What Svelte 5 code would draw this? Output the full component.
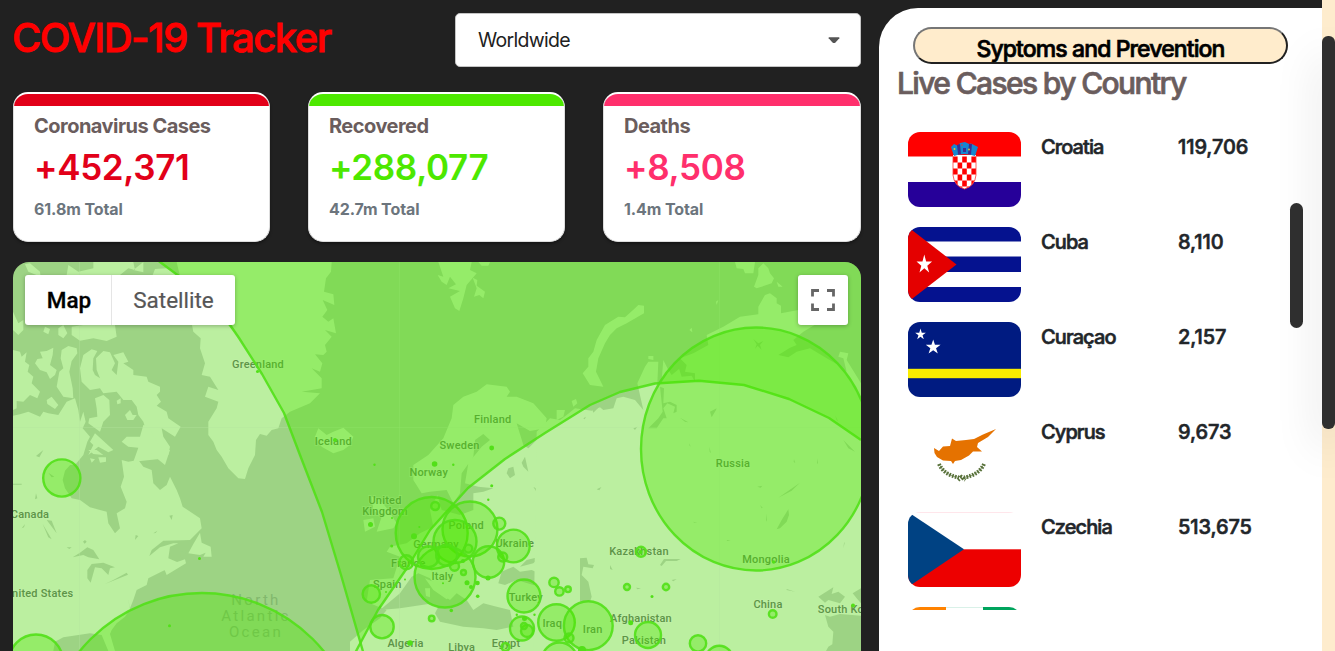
<script>
  const stats = [
    { title: 'Coronavirus Cases', value: '+452,371', total: '61.8m Total', color: '#e20019' },
    { title: 'Recovered', value: '+288,077', total: '42.7m Total', color: '#4de800' },
    { title: 'Deaths', value: '+8,508', total: '1.4m Total', color: '#ff2f6c' }
  ];
  const countries = [
    { flag: 'hr', name: 'Croatia', cases: '119,706' },
    { flag: 'cu', name: 'Cuba', cases: '8,110' },
    { flag: 'cw', name: 'Curaçao', cases: '2,157' },
    { flag: 'cy', name: 'Cyprus', cases: '9,673' },
    { flag: 'cz', name: 'Czechia', cases: '513,675' },
    { flag: 'ci', name: '', cases: '' }
  ];
  // label, x, baseline
  const labels = [
    ['Greenland', 258, 367.5], ['Iceland', 333.3, 444.5], ['Finland', 492.7, 422.5], ['Sweden', 459.5, 449],
    ['Norway', 428.7, 475.5], ['United', 385, 503.5], ['Kingdom', 385, 515], ['Poland', 466.3, 528.5],
    ['Germany', 436, 548], ['Ukraine', 514.8, 547], ['France', 408.3, 567], ['Italy', 442.5, 580],
    ['Spain', 387.3, 587.5], ['Turkey', 525.8, 600.5], ['Iraq', 552.3, 627], ['Iran', 592.7, 633],
    ['Egypt', 506, 646.5], ['Algeria', 405.5, 647], ['Libya', 461.7, 651], ['Russia', 733, 467],
    ['Mongolia', 766, 562.5], ['Kazakhstan', 639, 555], ['China', 768, 607.5], ['Afghanistan', 641, 621.5],
    ['Pakistan', 644, 643.5], ['Canada', 30, 518], ['United States', 39, 597], ['South Korea', 849, 612.5]
  ];
  const circles = [
    [61.8, 478, 18.6], [36, 661.5, 27], [201.7, 750, 157],
    [431.7, 533, 36], [470, 529, 27.5], [455, 541.5, 21.5], [445, 577, 30.5], [488.5, 562, 15.7], [513.3, 546, 16.4],
    [499.3, 523.6, 6], [524, 596, 16.5], [428.5, 556.7, 10.5], [446.7, 555.3, 10.5], [435.2, 506, 4], [406.3, 562.3, 7],
    [371.3, 594, 8.7], [382, 626.7, 11.7], [522, 628.5, 12], [527, 631, 6], [556.5, 622.5, 18.3], [588.3, 625.7, 24.4],
    [559.5, 660, 17.5], [554, 582.4, 4.7], [559.4, 591.4, 4.2], [568, 589.3, 2.8], [431.7, 618.4, 2.8], [502.7, 557, 4.5],
    [468.3, 548.6, 4], [454.5, 566.3, 4.5], [463.5, 572.5, 2.5], [648, 635, 13], [698, 643.4, 8.2], [719.3, 659, 13.3],
    [641, 551.8, 5], [627, 587, 3], [666, 587, 3.2], [772.7, 614, 3.8], [569, 638, 4.5], [524, 626, 3], [505.5, 647, 4]
  ];
  const dots = [
    [335, 440, 2], [491.7, 448, 2.4], [434.6, 464, 2.8], [370.5, 524.5, 2.5], [414, 536.3, 3], [374.5, 464.7, 1.2],
    [453.3, 464.7, 1.2], [491.7, 485.7, 1.5], [488.3, 499.7, 1.2], [392, 518, 1], [391.7, 546, 1.5], [419.3, 527, 1],
    [380, 607, 1.2], [386, 592, 1], [405, 579.6, 1], [443, 583.3, 1], [467, 582.7, 2.5], [477.5, 583, 2.3], [471, 587, 2],
    [477.7, 596.2, 1.8], [451.3, 610.5, 1.8], [516.8, 614.8, 1.2], [534.5, 614.8, 1.2], [488, 578, 2.5], [410, 643, 2.8],
    [199.5, 558.5, 1.5], [169.5, 625.7, 1.5], [257.5, 371.5, 1.5], [773.7, 562, 1.8], [652, 596.5, 1.5], [630.7, 622.7, 2.5],
    [853, 605.5, 2], [582, 650, 4], [524.5, 618.5, 2.5], [463, 561, 2], [640.5, 552, 2]
  ];
  const star = '0,-10 2.25,-3.1 9.5,-3.1 3.65,1.2 5.9,8.1 0,3.8 -5.9,8.1 -3.65,1.2 -9.5,-3.1 -2.25,-3.1';
  const checks = [];
  for (let r = 0; r < 6; r++) for (let c = 0; c < 5; c++) if ((r + c) % 2 === 0) checks.push([c, r]);
</script>

<div class="app">
  <main class="left">
    <header>
      <h1>COVID-19 Tracker</h1>
      <div class="select"><span>Worldwide</span><svg width="12" height="7" viewBox="0 0 12 7"><path d="M.7.3h10.600v1L7.500 5.500q-1.500 1-3 0L.7 1.300z" fill="#555" /></svg></div>
    </header>

    <section class="stats">
      {#each stats as s}
        <article style:--tone={s.color}>
          <h2>{s.title}</h2>
          <strong>{s.value}</strong>
          <p>{s.total}</p>
        </article>
      {/each}
    </section>

    <section class="map">
      <svg class="world" viewBox="13 262 848 389" width="848" height="389">
        <defs>
          <clipPath id="north"><path d="M150,250 L160,262 206,299 239,338 262,374 284,413 300,455 322,512 341,575 361,643 378,610 407,568 430,530 468,488 505,459 545,433 590,405 620,392 655,383.500 699,380.700 744,385 789,399 829,418 861,440 V250Z" /></clipPath>
        </defs>
        <rect x="13" y="262" width="848" height="389" fill="#9dd384" />

        <g transform="translate(0 255) scale(.33333)" class="land">
          <path d="M39,285 L60,290 65,305 80,292 75,320 88,330 83,350 100,365 95,385 120,410 112,430 90,420 70,440 50,438 50,460 39,465Z" />
          <path d="M39,482 L60,478 85,470 120,485 130,470 145,475 175,480 200,440 225,430 235,465 240,500 250,470 257,500 248,520 270,545 262,560 250,600 225,630 39,630Z" />
          <path d="M120,290 L140,288 160,278 158,300 150,330 170,345 165,360 150,372 140,352 120,345 105,325 112,312 128,310Z" />
          <path d="M185,285 L205,273 230,280 232,295 215,318 208,350 218,400 220,430 190,425 170,395 178,350 190,340 182,310Z" />
          <path d="M245,380 L240,340 250,300 275,283 292,288 280,310 278,345 285,360 300,370 290,345 288,310 310,288 330,292 345,325 335,345 350,360 355,320 340,300 370,292 385,320 370,325 400,345 400,360 440,365 445,380 480,395 480,410 470,420 483,440 470,452 500,470 505,490 542,515 525,545 485,520 490,545 510,575 505,600 485,610 450,565 430,500 415,480 410,455 395,435 370,435 350,410 310,415 300,400 270,405Z" />
          <path d="M285,430 L310,420 328,435 330,480 310,500 300,530 265,505 268,490 292,485 290,460Z M285,535 L340,585 325,592 295,575 265,600 280,570 270,560Z M365,560 L380,545 420,545 430,510 445,512 470,560 490,585 500,610 400,620 415,578 385,575Z M375,480 L390,465 398,480 410,480 400,495 382,495Z M350,437 L362,430 362,445 352,448Z" />
          <path d="M140,435 L155,425 175,450 165,462 142,447Z M215,215 L250,210 345,210 350,245 320,258 280,250 240,257 215,240Z M175,220 L190,210 202,235 190,250 175,240Z M135,215 L150,222 145,238 130,230Z M39,170 L55,205 70,195 70,225 55,240 39,225Z" />
          <path d="M75,28 L90,25 120,50 122,65 85,50Z M205,30 L235,50 280,40 280,21 400,21 405,45 385,40 360,60 200,60Z M430,21 L400,45 430,52Z M458,60 L465,42 500,40 530,60Z" />
          <path d="M530,21 L995,21 993,50 978,70 972,110 1000,118 1003,150 968,135 982,165 967,185 985,200 1000,190 1008,235 975,225 995,245 975,270 980,290 970,300 945,298 967,325 960,350 935,340 965,370 965,400 905,410 960,415 930,445 870,470 845,490 835,520 815,525 800,542 780,537 768,555 765,600 745,640 735,672 715,670 685,640 665,605 650,585 640,560 625,540 625,500 650,460 655,440 615,425 625,395 655,405 630,365 605,360 615,325 600,280 602,250 580,230 575,205 560,150Z" />
        </g>
        <g transform="translate(0 450) scale(.33333)">
          <path class="land" d="M39,0 L230,0 215,40 195,62 188,90 195,115 215,145 240,150 270,172 320,185 325,220 345,250 360,235 350,190 375,175 380,155 362,110 372,80 365,30 385,35 415,30 430,50 455,60 460,100 480,120 500,105 510,80 530,120 540,145 548,170 600,205 605,235 570,270 490,272 455,300 448,318 480,292 520,280 535,280 510,290 505,325 545,342 510,355 490,362 445,385 440,405 410,420 400,450 390,475 384,445 390,478 375,500 350,520 335,540 330,552 345,603 325,603 305,555 270,550 190,562 165,575 160,603 39,603Z M565,310 L580,282 600,248 605,278 632,290 635,320 610,320 617,308 600,315Z M490,350 L555,328 558,340 500,375Z M265,0 L290,0 310,15 280,12Z M440,0 L485,0 510,0 495,45Z M295,22 L318,22 318,35 300,38Z M270,25 L285,28 275,38Z" />
          <path class="sea" d="M218,322 L240,308 262,292 280,300 298,328 265,322 250,315Z M262,360 L275,342 310,338 345,352 330,355 325,375 305,355 285,352 272,398 262,385Z M315,402 L340,390 380,368 384,374Z M140,210 L155,212 170,250Z M128,222 L155,268 145,262Z M105,148 L108,130 112,145Z M145,68 L163,80 155,82Z M108,18 L130,0 118,22Z M39,101 H65 V104 H39Z M405,270 L407,255 415,258Z M508,197 L518,195 515,210Z M249,275 l6,-5 5,5 -6,6Z M65,235 l10,-13 -3,10Z M200,292 h15 l-7,5Z M460,250 l12,-8 -5,7Z M540,305 L562,300 545,328Z" />
        </g>

        <g transform="translate(350 460) scale(.33333)">
          <path class="land" d="M235,-15 L280,-65 305,-125 310,-165 340,-190 380,-205 410,-227 470,-220 480,-205 470,-190 500,-190 550,-170 590,-125 585,-95 540,-87 500,-110 520,-45 535,-35 560,-60 640,-70 640,573 0,573 0,545 40,510 90,475 110,450 85,440 50,425 60,360 130,355 150,290 110,275 120,260 170,250 210,220 250,200 240,150 262,105 275,150 330,165 370,150 370,100 400,95 430,85 385,80 345,70 355,10 395,-40 420,-60 400,-78 375,-60 370,-10 335,40 330,100 310,130 290,90 240,95 215,100 190,60 190,15Z" />
          <path class="land" d="M65,110 L90,120 115,150 140,190 130,205 80,215 95,170 70,150Z M40,180 L70,175 75,200 45,215Z" />
          <path class="sea" d="M90,450 L150,400 185,350 205,340 240,355 270,400 300,420 320,400 350,420 370,450 400,430 440,440 480,450 490,500 440,510 400,505 340,500 270,485 255,460 265,440 235,432 150,445Z" />
          <path class="sea" d="M445,370 L455,335 490,320 510,335 545,330 580,345 600,365 560,378 500,360 465,375Z M510,320 L530,300 570,290 550,310Z M648,332 L670,300 705,290 735,295 715,320 705,340 725,350 735,380 725,395 740,430 680,430 670,395 675,375Z" />
          <path class="sea" d="M475,25 L490,20 495,45 480,55 470,40Z M515,8 L525,-10 535,35 520,20Z M550,80 L565,90 560,97Z M685,10 L700,18 690,18Z" />
          <path class="land" d="M225,355 L260,370 300,410 290,418 250,390Z M225,385 L240,385 240,412 228,408Z" />
        </g>
        <g transform="translate(290 255) scale(.33333)" class="land">
          <path d="M445,21 L545,21 540,45 560,55 530,90 520,130 508,168 495,160 480,125 510,108 475,100 498,88 480,65 470,90 455,80 443,60 460,65Z M548,68 L562,75 560,92 585,110 580,130 568,120 552,125 560,100Z M565,21 L600,21 595,32 575,32Z M75,545 L85,520 110,540 130,530 160,518 190,545 180,570 160,585 130,595 95,575Z M845,438 L858,432 862,445 850,455Z M800,465 L825,465 820,485 800,495Z" />
        </g>
        <g transform="translate(580 255) scale(.33333)">
          <path class="land" d="M-130,530 L-90,490 -60,495 -40,480 -15,460 35,467 60,457 70,465 100,460 110,430 130,425 165,435 190,465 172,385 195,335 205,320 235,320 232,385 245,375 250,315 265,345 275,360 300,340 300,310 340,295 385,270 380,240 430,215 480,185 535,178 535,155 555,120 570,115 590,130 590,145 603,152 603,175 655,165 720,200 670,230 640,255 650,270 630,278 595,300 625,307 650,290 690,280 740,310 775,330 800,350 790,310 775,305 780,290 805,295 800,315 843,385 843,1190 -140,1190Z" />
          <path class="land" d="M70,395 L30,390 8,355 25,335 25,310 40,290 50,255 75,210 115,185 135,187 165,160 175,150 192,152 192,175 140,205 110,220 90,240 75,265 55,310 48,350Z M465,21 L525,21 520,55 495,55 490,42 470,40Z M550,25 L565,40 570,55 582,70 575,85 530,100 522,95 535,60 535,40Z M590,80 L608,95 595,95Z M408,140 L415,135 410,150Z M328,225 L335,218 337,232Z M205,303 L220,303 220,315 205,312Z" />
          <path class="sea" d="M240,395 L248,470 235,490 205,520 230,520 250,490 260,490 250,460 262,445 285,455 280,475 290,470 290,450 270,440 250,445 252,400Z M35,455 l20,3 -15,15Z M300,310 L320,330 315,350 345,355 345,380 335,362 305,365 295,335Z M390,470 L410,460 408,465 395,487Z M300,488 L325,502 315,500Z M520,252 L535,265 550,258 540,270 545,285 533,272 525,282 530,268Z M790,555 L825,590 805,580Z M765,480 L775,500 770,495Z M328,565 l4,10 -4,-4Z M388,575 l5,20 -4,-5Z M160,520 l12,-5 -7,10Z M10,490 l8,-5 -4,8Z" />
        </g>
        <g transform="translate(580 450) scale(.33333)">
          <path class="sea" d="M735,495 L750,500 780,492 843,497 843,603 738,603 745,590 757,583 760,545 745,530Z M715,440 L760,412 755,432 775,425 795,440 780,460 745,450 735,458Z M818,430 L843,415 843,460 830,445Z M0,325 L20,323 25,343 42,345 38,355 10,350 5,375 25,395 35,440 30,455 0,455Z" />
          <path class="sea" d="M565,245 L590,238 605,210 625,178 627,195 620,215 600,235Z M240,345 L252,327 302,327 290,333 258,333 245,348Z M595,143 L660,98 635,122Z M532,110 l15,-3 -5,6Z M540,165 l8,8 -3,2Z M558,190 l3,25 -3,-5Z M90,345 l8,15 -8,-3Z M275,390 l15,-3 -10,7Z M168,413 l15,2 -10,3Z M795,275 l-5,20 2,-15Z M620,417 l25,8 -25,-5Z M50,118 l14,-7 -6,10Z M340,215 l12,4 -10,-1Z M440,270 l12,1 -10,2Z M642,28 l4,12 -5,-5Z M712,25 l2,15 -3,1Z" />
        </g>
        <path d="M79.500,262 V651 M399.500,262 V651 M719.500,262 V651 M13,427.500 H861" stroke="#b5e59d" stroke-opacity=".35" />

        <g class="labels">
          {#each labels as [text, x, y]}<text {x} {y}>{text}</text>{/each}
          <g class="ocean">
            <text x="256" y="605">North</text><text x="256" y="621">Atlantic</text><text x="256" y="637">Ocean</text>
          </g>
        </g>

        <g fill="#4de800" fill-opacity=".34" stroke="#52e018" stroke-opacity=".9" stroke-width="2.400">
          <rect x="13" y="250" width="870" height="401" clip-path="url(#north)" stroke="none" />
          <g fill="none" stroke-linejoin="round">
            <path d="M150,254 L160,262 187,282 206,299 228,322 239,338 262,374 284,413 300,455 322,512 341,575 364,655" />
            <path d="M354,655 L378,610 407,568 430,530 468,488 505,459 545,433 590,405 620,392 655,383.500 699,380.700 744,385 789,399 829,418 861,440" />
          </g>
          <ellipse cx="756" cy="449" rx="115" ry="121.500" />
          {#each circles as [cx, cy, r]}<circle {cx} {cy} {r} />{/each}
        </g>
        <g fill="#52e018">{#each dots as [cx, cy, r]}<circle {cx} {cy} {r} />{/each}</g>
      </svg>
      <div class="controls">
        <div class="types"><b>Map</b><span>Satellite</span></div>
        <div class="full"><svg width="24" height="24" viewBox="0 0 24 24"><path d="M1.500 8.500V2.500h6.500M16 2.500h6.500v6M22.500 15.500v6h-6.500M8 21.500h-6.500v-6" fill="none" stroke="#666" stroke-width="2.800" /></svg></div>
      </div>
    </section>
  </main>

  <aside>
    <button>Syptoms and Prevention</button>
    <h3>Live Cases by Country</h3>
    <div class="list">
      <div class="rows">
        {#each countries as c}
          <div class="row">
            <svg class="flag" viewBox="0 0 113 75" width="113" height="75">
              {#if c.flag === 'hr'}
                <rect width="113" height="75" fill="#fff" /><rect width="113" height="24.500" fill="#f00" /><rect y="50" width="113" height="25" fill="#260099" />
                <path d="M45,23 H68 V43 Q67,54 56.500,57 Q46,54 45,43Z" fill="#fff" />
                <g clip-path="url(#shield)">{#each checks as [x, y]}<rect x={45 + x * 4.6} y={24.500 + y * 6} width="4.600" height="6" fill="#f00" />{/each}</g>
                <clipPath id="shield"><path d="M45,23 H68 V43 Q67,54 56.500,57 Q46,54 45,43Z" /></clipPath>
                <path d="M45,24.500 V43 Q46,54 56.500,57 Q67,54 68,43 V24.500" fill="none" stroke="#ff3a3a" stroke-width=".8" />
                <path d="M46,24 L43,15 46,12 50,14 52,11 57,10 61,12 63,11.500 67,13.500 70,15 67,24 Q56,20 46,24Z" fill="#1687cf" />
                <path d="M49,13 l3,-1 1,10 -3,.6Z M61,12 l3,0 -1,10.600 -3,-.6Z M55,16h3v4h-3Z" fill="#3b2d91" /><circle cx="46.500" cy="17" r="1" fill="#e7c735" /><circle cx="54" cy="13" r=".8" fill="#e33" /><circle cx="61" cy="17.500" r="1" fill="#d6bc3a" />
              {:else if c.flag === 'cu'}
                <rect width="113" height="75" fill="#05128f" /><path d="M0,22H113M0,52.500H113" stroke="#fff" stroke-width="15" /><path d="M0,0 L48.500,37.500 0,75Z" fill="#e40000" />
                <polygon points={star} transform="translate(16.300 37.500) scale(.82 1)" fill="#fff" />
              {:else if c.flag === 'cw'}
                <rect width="113" height="75" fill="#001b81" /><rect y="46.800" width="113" height="9.400" fill="#f9ed00" />
                <polygon points={star} transform="translate(12.500 12.500) scale(.56 .6)" fill="#fff" /><polygon points={star} transform="translate(25.200 25.200) scale(.78)" fill="#fff" />
              {:else if c.flag === 'cy'}
                <rect width="113" height="75" fill="#fff" />
                <g transform="translate(0 8)">
                  <path d="M26,23 L31,26 35,21.500 42,21 44,13.500 48,16 58,15 66,14 75,9.500 88,4 80,12 70,18 69,22 74,26.500 65,26.500 61,30.500 53,35 47,36 45,39 43,36 35,35.500 29,32 26.500,28Z" fill="#e57200" />
                  <path d="M31,39 Q36,50 51,52.500 M76,39 Q71,50 56,52.500 M50,55 l3.500,-3 4,3" fill="none" stroke="#58713a" stroke-width="4" stroke-dasharray="1.700 1.300" />
                  <path d="M31,39 Q36,50 51,52.500 M76,39 Q71,50 56,52.500" fill="none" stroke="#58713a" stroke-width=".7" />
                </g>
              {:else if c.flag === 'cz'}
                <rect width="113" height="75" fill="#fff" /><rect y="-.3" width="113" height="1" fill="#ffdce2" /><rect y="37.300" width="113" height="38" fill="#ed0000" /><path d="M0,0 L56,37.300 0,75Z" fill="#004283" />
              {:else}
                <rect width="113" height="75" fill="#fff" /><rect width="113" height="1" fill="#d9f1e8" /><rect width="38" height="75" fill="#ff8200" /><rect x="75" width="38" height="75" fill="#00a45d" />
              {/if}
            </svg>
            <span class="name">{c.name}</span><span class="num">{c.cases}</span>
          </div>
        {/each}
      </div>
      <i class="thumb"></i>
    </div>
  </aside>
  <div class="scroll"><i></i></div>
</div>

<style>
  :global(body) { margin: 0; background: #212121; }
  * { box-sizing: border-box; }
  h1, h2, h3, p { margin: 0; }
  .app { width: 1335px; height: 651px; display: flex; overflow: hidden; background: #212121; font-family: Inter, "Liberation Sans", sans-serif; }
  .left { width: 848px; margin: 13px 18px 0 13px; flex: none; }
  header { display: flex; justify-content: space-between; height: 54px; }
  h1 { font-size: 40px; line-height: 50px; font-weight: 500; letter-spacing: -1.52px; margin-left: -1px; color: #f00; white-space: nowrap; -webkit-text-stroke: .8px; }
  .select { width: 406px; height: 54px; background: #fff; border: 1px solid #c4c4c4; border-radius: 5px; padding: 0 20px 0 22px; display: flex; align-items: center; justify-content: space-between; font-size: 19.500px; letter-spacing: -.7px; color: #212121; }
  .stats { display: grid; grid-template-columns: 257px 257px 258px; justify-content: space-between; margin: 25px 0 20px; }
  article { height: 150px; background: #fff; border: 1px solid #ddd; border-top: 2px solid #fff; border-radius: 15px; overflow: hidden; padding-left: 20px; box-shadow: 0 2px 3px #0005; }
  article::before { content: ''; display: block; height: 12px; margin-left: -20px; background: var(--tone); }
  h2 { font-size: 20px; line-height: 24px; margin-top: 8px; font-weight: 700; color: #6a5d5d; letter-spacing: -.52px; }
  strong { display: block; font-size: 35px; line-height: 44px; margin-top: 7px; font-weight: 600; letter-spacing: -.35px; color: var(--tone); }
  article p { font-size: 16px; line-height: 20px; margin-top: 10px; font-weight: 700; letter-spacing: -.1px; color: #6c757d; }
  .map { position: relative; height: 389px; border-radius: 16px 16px 0 0; overflow: hidden; }
  .world { display: block; }
  .land { fill: #bbefa0; }
  .sea { fill: #9dd384; }
  .labels { font: 500 11px Roboto, sans-serif; fill: #5d9448; text-anchor: middle; letter-spacing: .2px; stroke: #c4f0ad; stroke-opacity: .4; stroke-width: 2px; paint-order: stroke; }
  .ocean { font-size: 15px; font-weight: 400; letter-spacing: 2.300px; fill: #82b86d; stroke: none; }
  .controls { position: absolute; inset: 13px 13px auto 12px; display: flex; justify-content: space-between; font-family: Roboto, sans-serif; font-size: 22.500px; line-height: 51px; }
  .types { display: flex; height: 50px; background: #fff; border-radius: 3px; box-shadow: 0 1px 4px #0004; }
  .types b { width: 86px; padding-left: 2px; text-align: center; font-weight: 500; color: #000; -webkit-text-stroke: .3px; }
  .types span { width: 124px; text-align: center; color: #565656; border-left: 1px solid #e5e5e5; -webkit-text-stroke: .2px; }
  .full { width: 50px; height: 50px; background: #fff; border-radius: 3px; box-shadow: 0 1px 4px #0004; display: grid; place-items: center; }
  aside { width: 443px; flex: none; margin-top: 8px; background: #fff; border-top-left-radius: 39px; padding: 19px 19px 0; color: #212529; }
  button { display: block; width: 375px; height: 37px; margin-left: 15px; border-radius: 19px; border: 2px solid; border-color: #767676 #212121 #212121 #767676; background: #ffeccc; font: 500 23px/30px Inter, sans-serif; letter-spacing: -.9px; padding: 5px 0 0; color: #000; -webkit-text-stroke: .7px; }
  h3 { font-size: 30px; line-height: 36px; margin: 1px 0 0 -1px; font-weight: 500; letter-spacing: -1.63px; color: #6a5d5d; white-space: nowrap; -webkit-text-stroke: .7px; }
  .list { height: 500px; margin-top: 9px; display: flex; justify-content: space-between; overflow: hidden; }
  .rows { padding: 22px 0 0 10px; }
  .row { display: flex; height: 95px; font-size: 20px; font-weight: 500; line-height: 24px; letter-spacing: -.9px; -webkit-text-stroke: .6px; }
  .flag { border-radius: 12px; overflow: hidden; flex: none; }
  .name { width: 137px; margin: 3px 0 0 20px; }
  .num { margin-top: 3px; letter-spacing: -.1px; }
  .thumb { width: 13px; height: 125px; margin-top: 93px; border-radius: 7px; background: #303030; }
  .scroll { width: 13px; flex: none; padding-top: 36px; background: #feeccd; }
  .scroll i { display: block; height: 393px; border-radius: 6px; background: #2f2f2f; box-shadow: 0 20px 44px rgba(0, 0, 0, .17); }
</style>
